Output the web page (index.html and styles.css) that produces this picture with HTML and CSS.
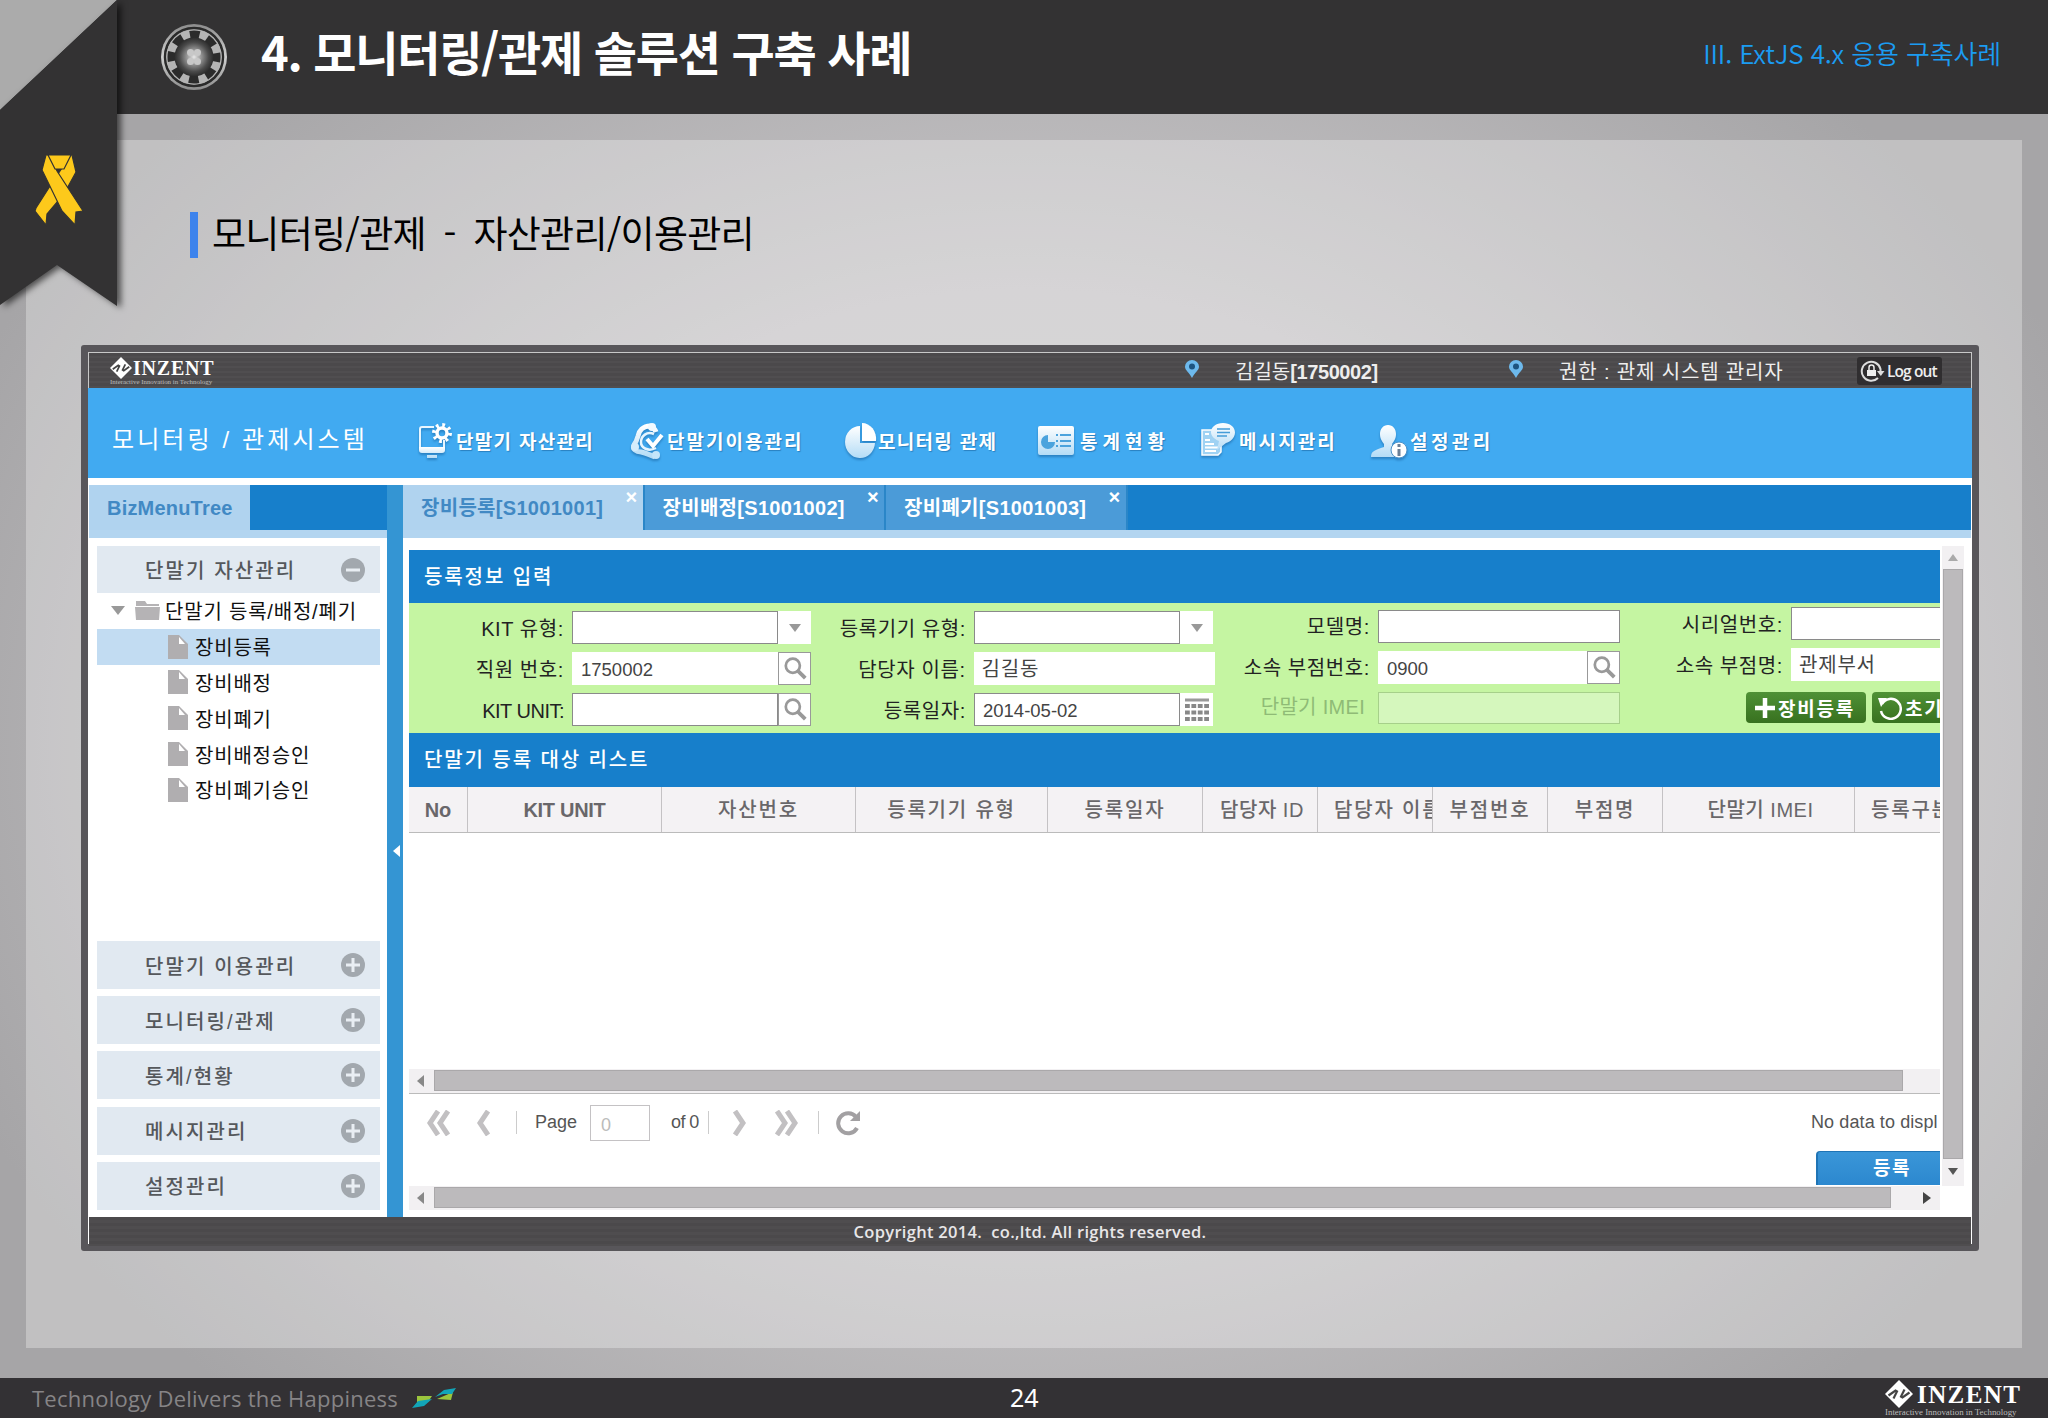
FILE: index.html
```html
<!DOCTYPE html>
<html lang="ko">
  <head>
    <title>모니터링/관제 솔루션 구축 사례</title>
    <meta charset="utf-8">
    <link rel="stylesheet" href="styles.css">
  </head>
  <body>
    <svg width="0" height="0" class="defs">
      <defs>
        <linearGradient id="ice" x1="0" y1="0" x2="0" y2="1">
          <stop offset="0" stop-color="#fff"/>
          <stop offset="1" stop-color="#b4dcf6"/>
        </linearGradient>
        <linearGradient id="rim" x1="0" y1="0" x2="0" y2="1">
          <stop offset="0" stop-color="#8c8c8c"/>
          <stop offset="0.5" stop-color="#d0d0d0"/>
          <stop offset="1" stop-color="#8c8c8c"/>
        </linearGradient>
        <radialGradient id="metal">
          <stop offset="0" stop-color="#e8e8e8"/>
          <stop offset="0.35" stop-color="#999"/>
          <stop offset="0.75" stop-color="#4a4a4a"/>
          <stop offset="1" stop-color="#2c2c2c"/>
        </radialGradient>
        <symbol id="mark" viewBox="0 0 28 28">
          <path fill="#fff" d="M14 0l14 14-14 14L0 14z"/>
          <path fill="none" stroke="#444" stroke-width="2.2" d="M3.500 15.500l7-5 1.500 1-3.500 7M24.500 12.500l-7 5-1.500-1 3.500-7"/>
        </symbol>
        <symbol id="minus" viewBox="0 0 24 24">
          <circle cx="12" cy="12" r="12" fill="#a2a8ae"/>
          <path stroke="#e9eef3" stroke-width="3" d="M5 12h14"/>
        </symbol>
        <symbol id="plus" viewBox="0 0 24 24">
          <circle cx="12" cy="12" r="12" fill="#a2a8ae"/>
          <path stroke="#e9eef3" stroke-width="3" d="M5 12h14M12 5v14"/>
        </symbol>
        <symbol id="file" viewBox="0 0 20 24">
          <path fill="#b0aeb0" d="M0 0h11l9 9v15H0z"/>
          <path fill="#fff" d="M11 2l6 7h-6z"/>
        </symbol>
        <symbol id="search" viewBox="0 0 24 24">
          <circle cx="10" cy="9" r="6.500" fill="none" stroke="#999" stroke-width="2.500"/>
          <path stroke="#999" stroke-width="3.500" d="M14.500 13.500l7 7"/>
        </symbol>
        <symbol id="pin" viewBox="0 0 14 18">
          <path fill="#6db9ec" d="M7 18C4 12 0 10.500 0 6.500a7 6.500 0 0 1 14 0C14 10.500 10 12 7 18z"/>
          <circle cx="7" cy="6.500" r="3" fill="#1d5480"/>
        </symbol>
      </defs>
    </svg>

    <header class="slide-header">
      <svg class="gear" viewBox="0 0 68 68">
        <circle cx="34" cy="34" r="33" fill="url(#rim)"/>
        <circle cx="34" cy="34" r="29" fill="none" stroke="#2a2a2a" stroke-width="2.500"/>
        <circle cx="34" cy="34" r="27.500" fill="#b4b4b4"/>
        <circle cx="34" cy="34" r="22" fill="none" stroke="#2b2b2b" stroke-width="9" stroke-dasharray="9.500 7.780" stroke-dashoffset="4.750"/>
        <circle cx="34" cy="34" r="19.500" fill="url(#metal)"/>
        <g fill="#c8c8c8">
          <circle cx="30.500" cy="29.500" r="3.500"/>
          <circle cx="37.500" cy="29.500" r="3.500"/>
          <circle cx="30.500" cy="38.500" r="3.500"/>
          <circle cx="37.500" cy="38.500" r="3.500"/>
        </g>
      </svg>
      <h1>4. 모니터링/관제 솔루션 구축 사례</h1>
      <div class="chapter">III. ExtJS 4.x 응용 구축사례</div>
    </header>

    <svg class="ribbon" viewBox="0 0 130 320">
      <path fill="#ababab" d="M0 0h117L0 110z"/>
      <path class="ribbon-cloth" d="M117 0v306L57 265 0 305V110z"/>
      <g fill="#fdc91b" stroke="#333" stroke-width="1.200">
        <path d="M70 155h2l4 17-12 22-17 20-1 11-11-14 1-3 16-25 16-24z"/>
        <path d="M46 155h3l8 16 26 40-7 1-1 13-13-14-18-37-2-4z"/>
        <path d="M48 155h23l-7 14h-9z"/>
      </g>
    </svg>

    <main class="slide">
      <h2>모니터링/관제 <span>-</span> 자산관리/이용관리</h2>

      <div class="app">
        <div class="app-top">
          <div class="logo">
            <svg class="logo-mark"><use href="#mark"/></svg>
            <b>INZENT</b>
            <small>Interactive Innovation in Technology</small>
          </div>
          <svg class="pin"><use href="#pin"/></svg>
          <div class="user">김길동<b>[1750002]</b></div>
          <svg class="pin"><use href="#pin"/></svg>
          <div class="role">권한 : 관제 시스템 관리자</div>
          <div class="logout">
            <svg width="25" height="22" viewBox="0 0 25 22">
              <path fill="none" stroke="#ddd" stroke-width="2" d="M18 18A9.500 9.500 0 1 1 20.500 9v4"/>
              <path fill="#ddd" d="M17 11h7.500l-3.700 5z"/>
              <rect x="7" y="10" width="9" height="6" fill="#eee"/>
              <path fill="none" stroke="#eee" stroke-width="1.500" d="M9 10V7.500a2.500 2.500 0 0 1 5 0V10"/>
            </svg>Log out
          </div>
        </div>

        <nav class="app-nav">
          <div class="system">모니터링 / 관제시스템</div>
          <div class="menu m1">
            <svg width="36" height="38" viewBox="0 0 36 38">
              <path fill="none" stroke="#e8f6ff" stroke-width="2" d="M17 5H5a2 2 0 0 0-2 2v19h24v-8"/>
              <path fill="url(#ice)" d="M2 25h26v3a3 3 0 0 1-3 3H5a3 3 0 0 1-3-3zM10 33h10v3H10z"/>
              <circle cx="25" cy="11" r="5" fill="none" stroke="#fff" stroke-width="3.500"/>
              <circle cx="25" cy="11" r="8" fill="none" stroke="#fff" stroke-width="4" stroke-dasharray="2.700 3.580"/>
            </svg>단말기 자산관리
          </div>
          <div class="menu m2">
            <svg width="34" height="38" viewBox="0 0 34 38">
              <path fill="none" stroke="url(#ice)" stroke-width="5" d="M26 10c-1-3-3-5-6-6C13 4 9 9 8 14c-1 4-2 6-4 9-2 4 2 7 7 7 5 1 9 3 14 5"/>
              <path fill="none" stroke="#e6f5ff" stroke-width="2.500" d="M24 12c-7-3-13 2-13 8s7 10 15 6"/>
              <path fill="none" stroke="#fff" stroke-width="4" d="M17 17l6 7 9-11"/>
              <circle cx="22" cy="5" r="4" fill="#f2faff"/>
              <circle cx="5" cy="25" r="4" fill="#d5edfc"/>
              <circle cx="26" cy="33" r="4" fill="#c4e5fa"/>
            </svg>단말기이용관리
          </div>
          <div class="menu m3">
            <svg width="34" height="38" viewBox="0 0 34 38">
              <path fill="url(#ice)" d="M16 4v17h15a15 16 0 1 1-15-17z"/>
              <path fill="#fff" d="M18 1a14 16 0 0 1 14 18H18z"/>
            </svg>모니터링 관제
          </div>
          <div class="menu m4">
            <svg width="38" height="32" viewBox="0 0 38 32">
              <rect x="1" y="1" width="36" height="29" rx="2" fill="url(#ice)"/>
              <path fill="#4ba3dd" d="M11 10v7h7a7 7 0 1 1-7-7z"/>
              <path stroke="#4ba3dd" stroke-width="2" d="M19 10h2M23 10h11M19 16h2M23 16h11M19 21h2M23 21h11"/>
            </svg>통계현황
          </div>
          <div class="menu m5">
            <svg width="36" height="38" viewBox="0 0 36 38">
              <path fill="#9fd2f3" stroke="#fff" stroke-width="1.500" d="M2 8h19v22l-3 3H2z"/>
              <path stroke="#fff" stroke-width="2" d="M5 22h9M5 25.500h13M5 29h11M5 18h5M5 12h4"/>
              <path fill="url(#ice)" d="M23 1c7 0 12 4 12 9.500S30 20 26 21l-9 7 2-9c-5-2-8-5-8-9 0-5 5-9 12-9z"/>
              <path stroke="#459dd8" stroke-width="1.500" d="M17 7h13M17 10.500h13M17 14h10"/>
            </svg>메시지관리
          </div>
          <div class="menu m6">
            <svg width="38" height="38" viewBox="0 0 38 38">
              <path fill="url(#ice)" d="M18 3c5 0 8 4 8 9s-2 7-4 10v3l12 7v3H1c0-6 4-7 13-10v-3c-2-3-4-5-4-10s3-9 8-9z"/>
              <circle cx="29" cy="28" r="8" fill="#fff" stroke="#4a90c8"/>
              <path stroke="#6b7f96" stroke-width="3" d="M29 22v3M29 27v7"/>
            </svg>설정관리
          </div>
        </nav>

        <div class="app-body">
          <aside>
            <div class="tabbar"><div class="tab tree-tab">BizMenuTree</div></div>
            <div class="accordion">
              <div class="acc-head open">단말기 자산관리<svg><use href="#minus"/></svg></div>
              <div class="tree">
                <div class="node folder">
                  <svg width="14" height="9" viewBox="0 0 14 9"><path fill="#999" d="M0 0h14L7 9z"/></svg>
                  <svg width="25" height="19" viewBox="0 0 25 19"><path fill="#b5b3b5" d="M1 0h9l2 3h12v2H1zM0 6h25l-1 13H1z"/></svg>
                  단말기 등록/배정/폐기
                </div>
                <div class="node selected"><svg><use href="#file"/></svg>장비등록</div>
                <div class="node"><svg><use href="#file"/></svg>장비배정</div>
                <div class="node"><svg><use href="#file"/></svg>장비폐기</div>
                <div class="node"><svg><use href="#file"/></svg>장비배정승인</div>
                <div class="node"><svg><use href="#file"/></svg>장비폐기승인</div>
              </div>
              <div class="acc-head">단말기 이용관리<svg><use href="#plus"/></svg></div>
              <div class="acc-head">모니터링/관제<svg><use href="#plus"/></svg></div>
              <div class="acc-head">통계/현황<svg><use href="#plus"/></svg></div>
              <div class="acc-head">메시지관리<svg><use href="#plus"/></svg></div>
              <div class="acc-head">설정관리<svg><use href="#plus"/></svg></div>
            </div>
          </aside>

          <div class="splitter"><i></i></div>

          <section class="work">
            <div class="tabbar">
              <div class="tab active">장비등록[S1001001]<i>×</i></div>
              <div class="tab">장비배정[S1001002]<i>×</i></div>
              <div class="tab">장비폐기[S1001003]<i>×</i></div>
            </div>
            <div class="work-body">
              <div class="pane">
                <div class="pane-title">등록정보 입력</div>
                <div class="form">
                  <div class="col c1">
                    <div class="row"><label>KIT 유형:</label><div class="field"></div><div class="trigger"><svg width="12" height="8" viewBox="0 0 12 8"><path fill="#999" d="M0 0h12L6 8z"/></svg></div></div>
                    <div class="row"><label>직원 번호:</label><div class="field plain">1750002</div><div class="trigger boxed"><svg width="26" height="26"><use href="#search"/></svg></div></div>
                    <div class="row"><label class="tight">KIT UNIT:</label><div class="field"></div><div class="trigger boxed"><svg width="26" height="26"><use href="#search"/></svg></div></div>
                  </div>
                  <div class="col c2">
                    <div class="row"><label>등록기기 유형:</label><div class="field"></div><div class="trigger"><svg width="12" height="8" viewBox="0 0 12 8"><path fill="#999" d="M0 0h12L6 8z"/></svg></div></div>
                    <div class="row"><label>담당자 이름:</label><div class="field plain ko">김길동</div></div>
                    <div class="row"><label>등록일자:</label><div class="field">2014-05-02</div><div class="trigger">
                      <svg width="24" height="24" viewBox="0 0 24 24"><path stroke="#999" stroke-width="3" d="M0 2h24"/><path stroke="#888" stroke-width="4" stroke-dasharray="4.800 1.600" d="M0 8h24M0 14.500h24M0 21h24"/></svg></div></div>
                  </div>
                  <div class="col c3">
                    <div class="row"><label>모델명:</label><div class="field"></div></div>
                    <div class="row"><label>소속 부점번호:</label><div class="field plain">0900</div><div class="trigger boxed"><svg width="26" height="26"><use href="#search"/></svg></div></div>
                    <div class="row off"><label>단말기 IMEI</label><div class="field"></div></div>
                  </div>
                  <div class="col c4">
                    <div class="row"><label>시리얼번호:</label><div class="field"></div></div>
                    <div class="row"><label>소속 부점명:</label><div class="field plain ko">관제부서</div></div>
                    <div class="row buttons">
                      <div class="btn"><svg width="20" height="20" viewBox="0 0 20 20"><path stroke="#fff" stroke-width="4.500" d="M0 10h20M10 0v20"/></svg>장비등록</div>
                      <div class="btn reset"><svg width="24" height="24" viewBox="0 0 24 24"><path fill="none" stroke="#fff" stroke-width="2.500" d="M4 8a10 10 0 1 1-1 7"/><path fill="#fff" d="M0 2l9 0-6 9z"/></svg>초기화</div>
                    </div>
                  </div>
                </div>
                <div class="pane-title list">단말기 등록 대상 리스트</div>
                <div class="grid-head">
                  <div>No</div>
                  <div class="latin">KIT UNIT</div>
                  <div>자산번호</div>
                  <div>등록기기 유형</div>
                  <div>등록일자</div>
                  <div class="narrow">담당자 ID</div>
                  <div class="cut">담당자 이름</div>
                  <div>부점번호</div>
                  <div>부점명</div>
                  <div class="narrow">단말기 IMEI</div>
                  <div class="cut">등록구분</div>
                </div>
                <div class="grid-body"></div>
                <div class="hscroll"><i class="left"></i><b class="thumb"></b></div>
                <div class="paging">
                  <svg class="first" width="24" height="26" viewBox="0 0 24 26"><path d="M11 1L3 13l8 12M21 1l-8 12 8 12"/></svg>
                  <svg class="prev" width="14" height="26" viewBox="0 0 14 26"><path d="M11 1L3 13l8 12"/></svg>
                  <i class="sep s1"></i>
                  <span>Page</span>
                  <div class="page-no">0</div>
                  <span class="of">of 0</span>
                  <i class="sep s2"></i>
                  <svg class="next" width="14" height="26" viewBox="0 0 14 26"><path d="M3 1l8 12-8 12"/></svg>
                  <svg class="last" width="24" height="26" viewBox="0 0 24 26"><path d="M3 1l8 12-8 12M13 1l8 12-8 12"/></svg>
                  <i class="sep s3"></i>
                  <svg class="refresh" width="26" height="26" viewBox="0 0 26 26"><path d="M21 18a10 10 0 1 1-1-11"/><path class="tip" d="M24 1v10H14z"/></svg>
                  <span class="nodata">No data to displ</span>
                </div>
                <div class="submit"><div>등록</div></div>
                <div class="hscroll outer"><i class="left"></i><b class="thumb"></b><i class="right"></i></div>
              </div>
              <div class="vscroll"><i class="up"></i><b class="thumb"></b><i class="down"></i></div>
            </div>
          </section>
        </div>

        <div class="app-footer">Copyright 2014.&nbsp; co.,ltd. All rights reserved.</div>
      </div>
    </main>

    <footer class="slide-footer">
      <div class="motto">Technology Delivers the Happiness</div>
      <svg class="flags" width="44" height="21" viewBox="0 0 44 21">
        <path fill="#9bc53d" d="M5 8h15l-4 6H5zM25 11l16-7-2 8z"/>
        <path fill="#12a5b8" d="M0 20l6-7 14-2-8 7zM23 9l9-7 12-2-4 6-9 0z"/>
      </svg>
      <div class="page">24</div>
      <div class="logo big">
        <svg class="logo-mark"><use href="#mark"/></svg>
        <b>INZENT</b>
        <small>Interactive Innovation in Technology</small>
      </div>
    </footer>
  </body>
</html>
```
FILE: styles.css
```css
* {
  box-sizing: border-box;
}
body {
  margin: 0;
  width: 2048px;
  height: 1418px;
  overflow: hidden;
  display: flex;
  flex-direction: column;
  position: relative;
  font-family: "Liberation Sans", "Noto Sans CJK KR", sans-serif;
  font-size: 20px;
  white-space: nowrap;
  background: radial-gradient(ellipse 1150px 900px at 1024px 740px, #cbc9cb 0%, #c4c2c4 50%, #a6a5a7 100%);
}
svg {
  flex: none;
}
.defs {
  position: absolute;
}

/* slide frame */
.slide-header {
  height: 114px;
  flex: none;
  display: flex;
  align-items: center;
  padding: 0 47px 0 160px;
  background: #333233;
}
.gear {
  width: 68px;
  height: 68px;
}
h1 {
  margin: -12px 0 0 33px;
  font: bold 47px/60px "Noto Sans CJK KR", sans-serif;
  letter-spacing: -1.3px;
  color: #fff;
}
.chapter {
  margin: -8px 0 0 auto;
  font: 350 26px/40px "Noto Sans CJK KR", sans-serif;
  letter-spacing: -.15px;
  color: #1b9cf2;
}
.ribbon {
  position: absolute;
  left: 0;
  top: 0;
  width: 130px;
  height: 320px;
}
.ribbon-cloth {
  fill: #333233;
  filter: drop-shadow(4px 2px 3px rgba(0, 0, 0, .6));
}
.slide {
  flex: none;
  margin: 26px 26px 30px;
  height: 1208px;
  padding: 72px 0 0 55px;
  background: rgba(255, 255, 255, .3);
}
h2 {
  margin: 0 0 87px 109px;
  height: 46px;
  padding-left: 14px;
  border-left: 8px solid #3d83ec;
  font: 400 37px/41px "Noto Sans CJK KR", sans-serif;
  letter-spacing: -.7px;
  color: #000;
}
h2 span {
  margin: 0 8px;
}
.slide-footer {
  height: 40px;
  flex: none;
  display: flex;
  align-items: center;
  position: relative;
  padding: 0 27px 0 32px;
  background: #333134;
}
.motto {
  width: 380px;
  font: 22px/38px "Open Sans", sans-serif;
  letter-spacing: .25px;
  color: #868486;
}
.page {
  margin: -2px 0 0 554px;
  font: 25px/36px "Noto Sans", sans-serif;
  color: #fff;
}

/* logo */
.logo {
  display: grid;
  grid-template-columns: 22px 1fr;
  grid-template-rows: 22px 6px;
  width: 106px;
  font-family: "Liberation Serif", serif;
  color: #fff;
}
.logo-mark {
  width: 22px;
  height: 22px;
}
.logo b {
  font-size: 20px;
  line-height: 22px;
  letter-spacing: .8px;
  padding-left: 1px;
}
.logo small {
  grid-column: 1 / 3;
  font-size: 6.9px;
  line-height: 6px;
  color: #bbb;
}
.logo.big {
  width: 136px;
  margin-left: auto;
  grid-template-columns: 28px 1fr;
  grid-template-rows: 28px 8px;
}
.big .logo-mark {
  width: 28px;
  height: 28px;
}
.big b {
  padding-left: 4px;
  font-size: 25px;
  line-height: 30px;
  letter-spacing: 1.4px;
}
.big small {
  font-size: 8.9px;
  line-height: 8px;
}

/* application window */
.app {
  width: 1898px;
  height: 906px;
  border: 7px solid #58565a;
  border-radius: 3px;
  display: flex;
  flex-direction: column;
  background: #fff;
}
.app-top {
  height: 36px;
  flex: none;
  display: flex;
  align-items: center;
  padding-left: 21px;
  border: solid #c8c8c8;
  border-width: 1px 1px 0;
  background: repeating-linear-gradient(#4b494b 0 3px, #504e50 3px 5px);
  color: #eee;
}
.pin {
  width: 14px;
  height: 18px;
  margin: -3px 0 0 969px;
}
.user {
  width: 144px;
  margin-left: 36px;
}
.user b {
  letter-spacing: -.4px;
}
.user + .pin {
  margin-left: 130px;
}
.role {
  width: 226px;
  margin-left: 36px;
  letter-spacing: .85px;
}
.logout {
  display: flex;
  align-items: center;
  gap: 2px;
  width: 85px;
  height: 28px;
  margin-left: 72px;
  padding-left: 3px;
  border-radius: 3px;
  background: #302e30;
  font: 600 15.5px "Open Sans", sans-serif;
  letter-spacing: -.9px;
}
.app-nav {
  height: 90px;
  flex: none;
  display: flex;
  align-items: center;
  position: relative;
  padding: 15px 0 0 24px;
  background: #41aaf1;
  color: #fff;
}
.system {
  width: 305px;
  font-size: 24px;
  letter-spacing: 3.1px;
  margin-top: -6px;
}
.menu {
  display: flex;
  align-items: center;
  gap: 3px;
  font-size: 19px;
  font-weight: bold;
  letter-spacing: 1.3px;
  text-shadow: 1px 1px 1px #2a80c0;
}
.menu svg {
  filter: drop-shadow(0 2px 1px rgba(20, 90, 150, .5));
}
.m1 {
  width: 213px;
}
.m2 {
  width: 214px;
  letter-spacing: 2px;
}
.m3 {
  width: 193px;
  gap: 0;
}
.m4 {
  width: 163px;
  gap: 5px;
  letter-spacing: 5px;
}
.m5 {
  width: 170px;
  letter-spacing: 2.1px;
}
.m6 {
  gap: 2px;
  letter-spacing: 3.4px;
}
.app-body {
  height: 739px;
  flex: none;
  padding: 7px 1px 0;
  display: flex;
}
.app-footer {
  flex: 1;
  margin: 0 1px;
  text-align: center;
  background: repeating-linear-gradient(#4b494b 0 3px, #4f4d4f 3px 6px);
  font: 600 16.5px/29px "Open Sans", sans-serif;
  letter-spacing: .3px;
  color: #e8e6e8;
}

/* tabs */
.tabbar {
  height: 53px;
  flex: none;
  display: flex;
  border-bottom: 8px solid #b3d5f0;
  background: #177fcb;
}
.tab {
  position: relative;
  width: 241.5px;
  height: 45px;
  padding-left: 18px;
  border-right: 2px solid #2a86c8;
  background: #4b9bd8;
  color: #fff;
  font-weight: bold;
  line-height: 47px;
  letter-spacing: .3px;
}
.tab.active, .tree-tab {
  background: #b0d3ef;
  color: #4189c4;
}
.tree-tab {
  width: 161px;
  border: 0;
  letter-spacing: .2px;
}
.tab i {
  position: absolute;
  right: 5px;
  top: 2px;
  font: bold 20px/20px "Liberation Sans", sans-serif;
  color: #fff;
}

/* left menu */
aside {
  width: 298px;
  flex: none;
  display: flex;
  flex-direction: column;
}
.accordion {
  flex: 1;
  display: flex;
  flex-direction: column;
  padding: 8px 7px 0 8px;
}
.acc-head {
  height: 48px;
  flex: none;
  display: flex;
  justify-content: space-between;
  align-items: center;
  margin-bottom: 7.2px;
  padding: 0 15px 0 48px;
  background: #e1e9f1;
  color: #55585c;
  font-weight: 500;
  letter-spacing: 2.1px;
}
.acc-head.open {
  height: 47px;
  margin: 0;
}
.acc-head svg {
  width: 24px;
  height: 24px;
}
.tree {
  flex: 1;
  letter-spacing: .8px;
  color: #111;
}
.node {
  display: flex;
  align-items: center;
  gap: 7px;
  height: 35.8px;
  padding-left: 71px;
}
.node svg {
  width: 20px;
  height: 24px;
}
.folder {
  gap: 5px;
  padding-left: 14px;
}
.folder svg:first-child {
  width: 14px;
  height: 9px;
  margin-right: 5px;
}
.folder svg {
  width: 25px;
  height: 19px;
}
.selected {
  background: #c2dcf2;
}
.splitter {
  width: 16px;
  flex: none;
  display: flex;
  align-items: center;
  justify-content: flex-end;
  padding-right: 3px;
  background: #3495d3;
}
.splitter i {
  border: 6px solid transparent;
  border-right: 7px solid #fff;
  border-left: 0;
}

/* work area */
.work {
  flex: 1;
  min-width: 0;
}
.work-body {
  display: flex;
  height: 679px;
  padding: 8px 0 0 6px;
}
.pane {
  width: 1531px;
  padding-top: 4px;
  overflow: hidden;
}
.pane-title {
  height: 53px;
  padding-left: 15px;
  background: #177fcb;
  color: #fff;
  font-weight: 500;
  line-height: 54px;
  letter-spacing: 1.9px;
}
.pane-title.list {
  height: 54px;
}
.form {
  display: flex;
  height: 130px;
  background: #c5f5a2;
  color: #222;
}
.col {
  flex: none;
  display: flex;
  flex-direction: column;
  gap: 8px;
}
.c1 {
  width: 402px;
  padding-top: 8px;
}
.c2 {
  width: 404px;
  padding-top: 8px;
}
.c3 {
  width: 405px;
  padding-top: 7px;
}
.c4 {
  width: 460px;
  padding-top: 4px;
}
.row {
  display: flex;
  height: 33px;
}
.row label {
  width: 155px;
  margin-right: 8px;
  text-align: right;
  line-height: 36px;
  letter-spacing: .6px;
}
.c4 .row label {
  width: 163px;
}
.c3 .row label {
  line-height: 35px;
}
.row .tight {
  letter-spacing: -.5px;
}
.field {
  width: 206px;
  padding-left: 8px;
  border: 1.500px solid #8a8a8a;
  background: #fff;
  color: #444;
  font-size: 18.5px;
  line-height: 34px;
}
.plain {
  border-color: #fff;
}
.ko {
  padding-left: 7px;
  font-size: 20px;
  line-height: 33px;
  letter-spacing: .8px;
}
.c2 .plain, .c3 .field {
  width: 242px;
}
.c3 .plain {
  width: 209px;
}
.c4 .field {
  width: 242px;
}
.trigger {
  width: 33px;
  display: flex;
  align-items: center;
  justify-content: center;
  background: #fff;
}
.boxed {
  border: 1px solid #999;
}
.off label {
  padding-right: 5px;
  color: #8fbb76;
}
.c3 .off label {
  line-height: 31px;
  letter-spacing: .3px;
}
.off .field {
  background: #d5f7bd;
  border-color: #a6d08a;
}
.off {
  height: 32px;
}
.buttons {
  gap: 6px;
  padding: 3px 0 0 126px;
}
.btn {
  display: flex;
  align-items: center;
  gap: 3px;
  width: 120px;
  height: 31px;
  padding-left: 9px;
  border-radius: 4px;
  background: linear-gradient(#4f9136, #38711f);
  color: #fff;
  font-size: 19px;
  font-weight: bold;
  letter-spacing: 1.8px;
}
.reset {
  padding-left: 6px;
}
.grid-head {
  display: grid;
  grid-template-columns: 59px 194px 194px 192px 155px 115px 115px 115px 115px 192px 193px;
  height: 46px;
  border-bottom: 1px solid #bbb;
  background: #f4f2f4;
  color: #69676a;
  font-weight: 500;
  line-height: 46px;
  letter-spacing: 1.8px;
  text-align: center;
}
.grid-head div {
  overflow: hidden;
  border-right: 1px solid #c4c2c4;
}
.grid-head .latin {
  font-weight: bold;
  letter-spacing: -.3px;
}
.grid-head .narrow {
  padding-left: 4px;
  letter-spacing: .5px;
}
.grid-head div:first-child {
  font-weight: bold;
  letter-spacing: 0;
}
.grid-head .cut {
  padding-left: 16px;
  text-align: left;
}
.grid-body {
  height: 236px;
}
.hscroll {
  height: 25px;
  display: flex;
  align-items: center;
  background: #f2f0f2;
  border-bottom: 1px solid #bbb;
}
.hscroll .thumb {
  width: 1469px;
  height: 21px;
  margin-bottom: 2px;
  background: #bcbabc;
  border: 1px solid #aaa8aa;
}
.left, .right {
  border: 6px solid transparent;
}
.left {
  border-right: 7px solid #888;
  border-left: 0;
  margin: 0 10px 0 8px;
}
.right {
  border-left: 8px solid #444;
  border-right: 0;
  margin-left: 32px;
}
.outer {
  height: 24px;
  margin-top: 1px;
  border: 0;
}
.outer .thumb {
  width: 1457px;
}
.paging {
  display: flex;
  align-items: center;
  height: 57px;
  padding-left: 18px;
  font-size: 18px;
  color: #555;
}
.paging path {
  fill: none;
  stroke: #c2c0c2;
  stroke-width: 5;
}
.paging .refresh path {
  stroke: #a2a0a2;
  stroke-width: 4;
}
.paging .refresh .tip {
  fill: #a2a0a2;
  stroke: none;
}
.prev {
  margin-left: 26px;
}
.sep {
  width: 1px;
  height: 23px;
  background: #ccc;
}
.s1 {
  margin: 0 18px 0 25px;
}
.page-no {
  width: 60px;
  height: 36px;
  margin: 0 21px 0 13px;
  padding-left: 10px;
  border: 1px solid #c4c2c4;
  color: #bbb;
  line-height: 38px;
}
.of {
  letter-spacing: -.6px;
}
.s2 {
  margin: 0 23px 0 9px;
}
.last {
  margin-left: 28px;
}
.s3 {
  margin: 0 17px 0 20px;
}
.nodata {
  margin-left: auto;
  width: 129px;
  letter-spacing: .1px;
}
.submit {
  display: flex;
  justify-content: flex-end;
  height: 34px;
}
.submit div {
  width: 124px;
  padding-left: 55px;
  border-radius: 4px 0 0 0;
  border-top: 1px solid #1f74b5;
  border-left: 2px solid #1f74b5;
  background: linear-gradient(#3a96d8, #2c88cf);
  color: #fff;
  font-weight: bold;
  font-size: 19px;
  line-height: 34px;
  letter-spacing: 1.6px;
}
.vscroll {
  width: 22px;
  height: 640px;
  margin-left: 2px;
  display: flex;
  flex-direction: column;
  align-items: center;
  background: #f2f0f2;
}
.vscroll .thumb {
  width: 20px;
  height: 590px;
  background: #bcbabc;
  border: 1px solid #aaa8aa;
}
.up, .down {
  border: 5px solid transparent;
}
.up {
  border-bottom: 7px solid #aaa;
  border-top: 0;
  margin: 8px 0;
}
.down {
  border-top: 7px solid #555;
  border-bottom: 0;
  margin-top: 9px;
}
```
